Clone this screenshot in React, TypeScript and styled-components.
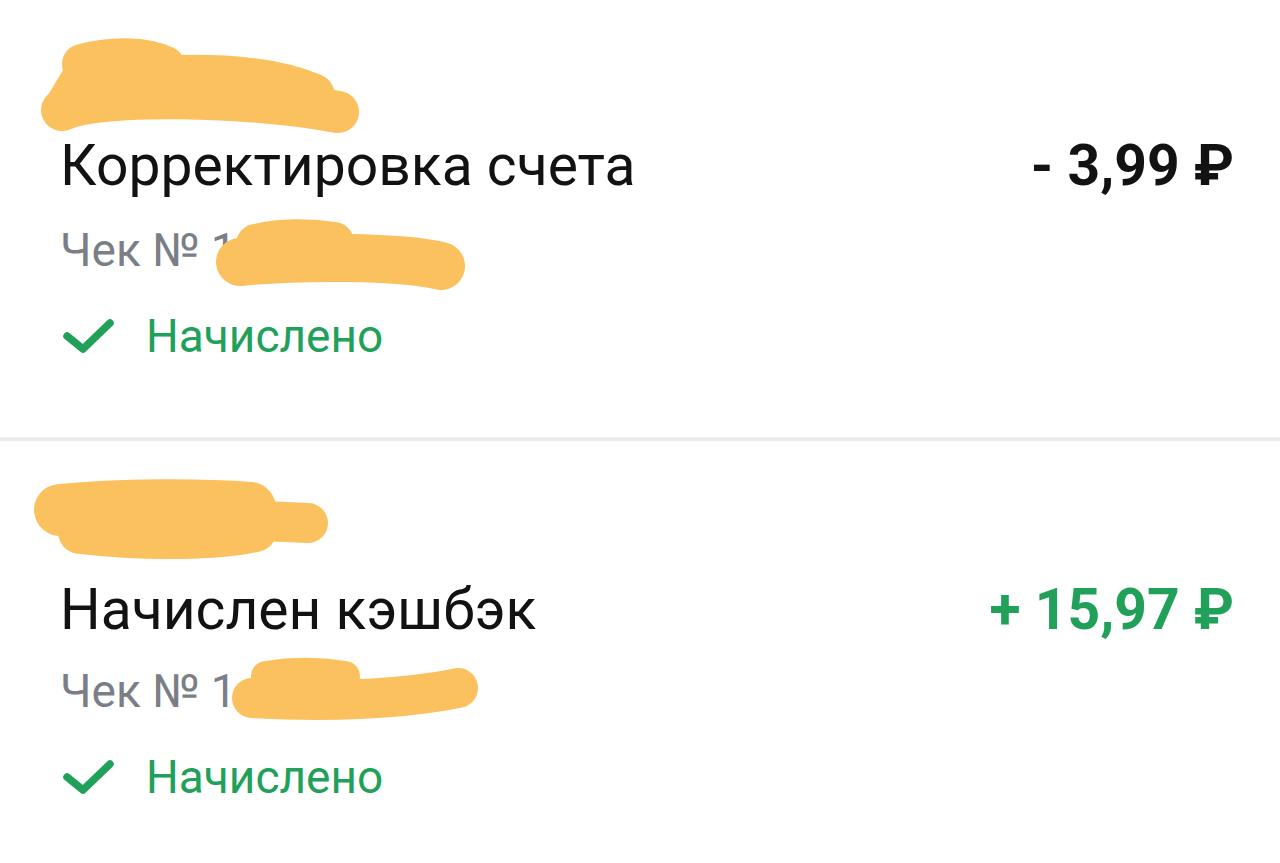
import React from "react";
import styled, { createGlobalStyle } from "styled-components";

const GlobalStyle = createGlobalStyle`
  html, body { margin: 0; padding: 0; background: #ffffff; }
  body { font-family: Roboto, "Noto Sans", "Liberation Sans", sans-serif; -webkit-font-smoothing: antialiased; }
`;

const List = styled.div`
  display: flex;
  flex-direction: column;
  width: 1280px;
`;

const Item = styled.section`
  display: flex;
  flex-direction: column;
  padding: 42px 46px 73px 60px;
`;

const Divider = styled.div`
  height: 4px;
  background: #e9e9e9;
  border-top: 1px solid #f1f1f1;
  box-sizing: border-box;
`;

const HeaderScribble = styled.svg`
  display: block;
  margin-left: -20px;
  width: 330px;
  height: 92px;
  overflow: visible;
`;

const TitleRow = styled.div<{ $shift?: number }>`
  display: flex;
  justify-content: space-between;
  align-items: baseline;
  margin-top: ${(p) => p.$shift ?? 0}px;
`;

const Title = styled.div`
  font-size: 57px;
  line-height: 64px;
  color: #121212;
  font-weight: 400;
`;

const Amount = styled.div<{ $positive?: boolean }>`
  font-size: 57px;
  line-height: 64px;
  font-weight: 700;
  color: ${(p) => (p.$positive ? "#21a05a" : "#121212")};
`;

const SubLine = styled.div<{ $shift?: number }>`
  position: relative;
  margin-top: ${(p) => 24 - (p.$shift ?? 0)}px;
  font-size: 46px;
  line-height: 56px;
  color: #7a7f87;
`;

const OverlayScribble = styled.svg`
  position: absolute;
  left: 140px;
  top: -10px;
  width: 290px;
  height: 90px;
  overflow: visible;
`;

const Status = styled.div`
  display: flex;
  align-items: center;
  gap: 30px;
  margin-top: 30px;
  font-size: 46px;
  line-height: 56px;
  color: #21a05a;
`;

const CheckIcon = styled.svg`
  display: block;
  width: 56px;
  height: 40px;
  flex: none;
`;

const BLOB = "#fbc15e";

type Stroke = { d: string; w: number };

const Strokes: React.FC<{ strokes: Stroke[] }> = ({ strokes }) => (
  <>
    {strokes.map((s, i) => (
      <path
        key={i}
        d={s.d}
        fill="none"
        stroke={BLOB}
        strokeWidth={s.w}
        strokeLinecap="round"
        strokeLinejoin="round"
      />
    ))}
  </>
);

type Entry = {
  title: string;
  amount: string;
  positive: boolean;
  shift: number;
  headerBox: string;
  headerStrokes: Stroke[];
  checkBox: string;
  checkStrokes: Stroke[];
};

const entries: Entry[] = [
  {
    title: "Корректировка счета",
    amount: "- 3,99 ₽",
    positive: false,
    shift: 0,
    headerBox: "40 42 330 92",
    headerStrokes: [
      { d: "M62 110 C100 92, 250 96, 338 112", w: 42 },
      { d: "M82 64 C110 56, 145 56, 165 66", w: 40 },
      { d: "M100 82 C200 74, 262 76, 312 96", w: 46 },
      { d: "M66 100 L84 70", w: 36 },
    ],
    checkBox: "200 212 290 90",
    checkStrokes: [
      { d: "M240 262 C300 256, 400 256, 441 266", w: 48 },
      { d: "M256 244 C280 238, 310 238, 334 242", w: 40 },
    ],
  },
  {
    title: "Начислен кэшбэк",
    amount: "+ 15,97 ₽",
    positive: true,
    shift: 3,
    headerBox: "40 483 330 92",
    headerStrokes: [
      { d: "M60 510 C120 504, 200 504, 250 508", w: 52 },
      { d: "M80 532 C150 540, 220 538, 255 530", w: 44 },
      { d: "M240 520 L308 523", w: 40 },
    ],
    checkBox: "200 653 290 90",
    checkStrokes: [
      { d: "M252 698 C320 702, 400 700, 458 688", w: 40 },
      { d: "M266 676 C290 672, 320 672, 345 676", w: 30 },
    ],
  },
];

const Check = () => (
  <CheckIcon viewBox="0 0 56 40">
    <polyline
      points="7,20 23,33 50,7"
      fill="none"
      stroke="#21a05a"
      strokeWidth={7.5}
      strokeLinecap="round"
      strokeLinejoin="round"
    />
  </CheckIcon>
);

export default function App() {
  return (
    <>
      <GlobalStyle />
      <List>
        {entries.map((e, i) => (
          <React.Fragment key={i}>
            <Item>
              <HeaderScribble viewBox={e.headerBox}>
                <Strokes strokes={e.headerStrokes} />
              </HeaderScribble>
              <TitleRow $shift={e.shift}>
                <Title>{e.title}</Title>
                <Amount $positive={e.positive}>{e.amount}</Amount>
              </TitleRow>
              <SubLine $shift={e.shift}>
                Чек № 1
                <OverlayScribble viewBox={e.checkBox}>
                  <Strokes strokes={e.checkStrokes} />
                </OverlayScribble>
              </SubLine>
              <Status>
                <Check />
                Начислено
              </Status>
            </Item>
            {i === 0 && <Divider />}
          </React.Fragment>
        ))}
      </List>
    </>
  );
}
